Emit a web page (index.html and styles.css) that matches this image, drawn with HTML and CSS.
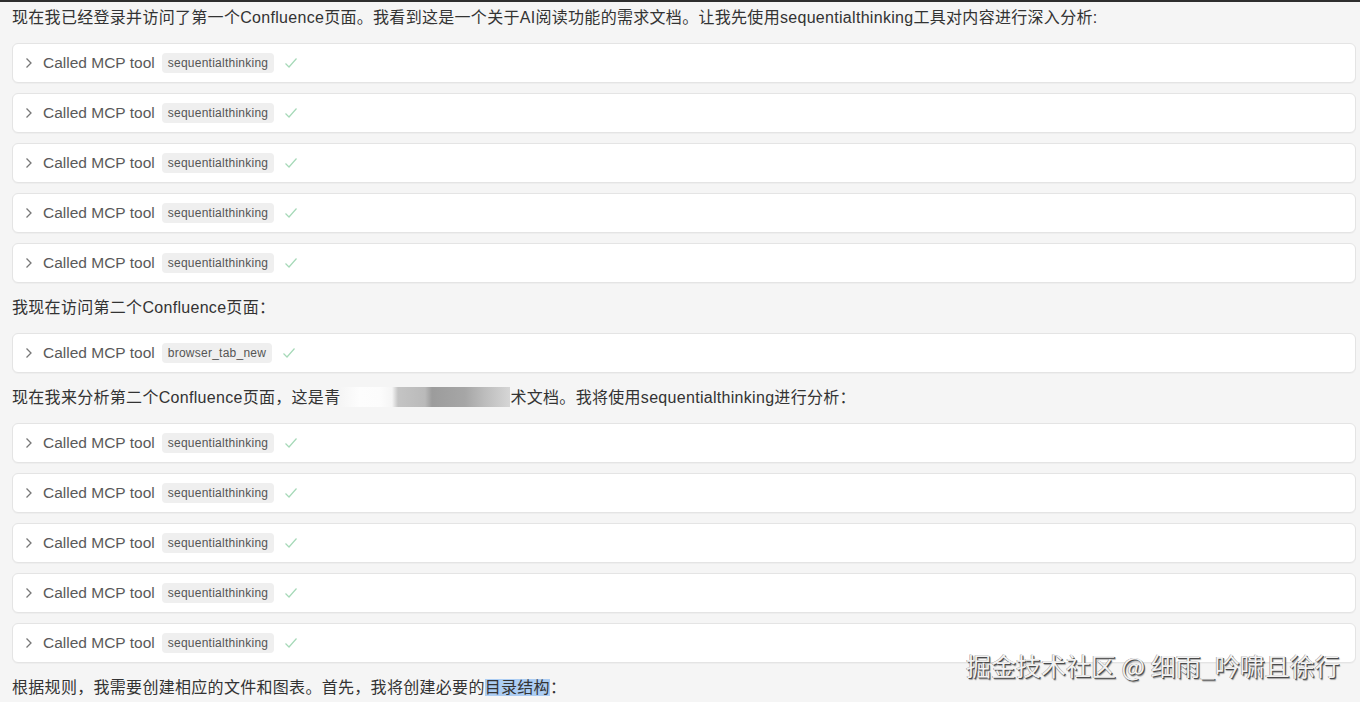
FILE: index.html
```html
<!DOCTYPE html>
<html lang="zh-CN">
<head>
<meta charset="UTF-8">
<title>Chat</title>
<link rel="stylesheet" href="styles.css">
</head>
<body>
<div class="topbar"></div>
<div id="thread">
    <p class="msg">现在我已经登录并访问了第一个Confluence页面。我看到这是一个关于AI阅读功能的需求文档。让我先使用sequentialthinking工具对内容进行深入分析:</p>

    <div class="tool"><span class="chev"><svg width="8" height="12" viewBox="0 0 8 12"><path d="M1.5 1.5 L6 6 L1.5 10.5" fill="none" stroke="#777" stroke-width="1.3"/></svg></span><span class="label">Called MCP tool</span><span class="badge">sequentialthinking</span><span class="ok"><svg width="14" height="12" viewBox="0 0 14 12"><path d="M1.5 6.5 L5 10 L12.5 1.5" fill="none" stroke="#a6d9b8" stroke-width="1.2"/></svg></span></div>
    <div class="tool"><span class="chev"><svg width="8" height="12" viewBox="0 0 8 12"><path d="M1.5 1.5 L6 6 L1.5 10.5" fill="none" stroke="#777" stroke-width="1.3"/></svg></span><span class="label">Called MCP tool</span><span class="badge">sequentialthinking</span><span class="ok"><svg width="14" height="12" viewBox="0 0 14 12"><path d="M1.5 6.5 L5 10 L12.5 1.5" fill="none" stroke="#a6d9b8" stroke-width="1.2"/></svg></span></div>
    <div class="tool"><span class="chev"><svg width="8" height="12" viewBox="0 0 8 12"><path d="M1.5 1.5 L6 6 L1.5 10.5" fill="none" stroke="#777" stroke-width="1.3"/></svg></span><span class="label">Called MCP tool</span><span class="badge">sequentialthinking</span><span class="ok"><svg width="14" height="12" viewBox="0 0 14 12"><path d="M1.5 6.5 L5 10 L12.5 1.5" fill="none" stroke="#a6d9b8" stroke-width="1.2"/></svg></span></div>
    <div class="tool"><span class="chev"><svg width="8" height="12" viewBox="0 0 8 12"><path d="M1.5 1.5 L6 6 L1.5 10.5" fill="none" stroke="#777" stroke-width="1.3"/></svg></span><span class="label">Called MCP tool</span><span class="badge">sequentialthinking</span><span class="ok"><svg width="14" height="12" viewBox="0 0 14 12"><path d="M1.5 6.5 L5 10 L12.5 1.5" fill="none" stroke="#a6d9b8" stroke-width="1.2"/></svg></span></div>
    <div class="tool"><span class="chev"><svg width="8" height="12" viewBox="0 0 8 12"><path d="M1.5 1.5 L6 6 L1.5 10.5" fill="none" stroke="#777" stroke-width="1.3"/></svg></span><span class="label">Called MCP tool</span><span class="badge">sequentialthinking</span><span class="ok"><svg width="14" height="12" viewBox="0 0 14 12"><path d="M1.5 6.5 L5 10 L12.5 1.5" fill="none" stroke="#a6d9b8" stroke-width="1.2"/></svg></span></div>

    <p class="msg">我现在访问第二个Confluence页面：</p>

    <div class="tool"><span class="chev"><svg width="8" height="12" viewBox="0 0 8 12"><path d="M1.5 1.5 L6 6 L1.5 10.5" fill="none" stroke="#777" stroke-width="1.3"/></svg></span><span class="label">Called MCP tool</span><span class="badge">browser_tab_new</span><span class="ok"><svg width="14" height="12" viewBox="0 0 14 12"><path d="M1.5 6.5 L5 10 L12.5 1.5" fill="none" stroke="#a6d9b8" stroke-width="1.2"/></svg></span></div>

    <p class="msg">现在我来分析第二个Confluence页面，这是青<span class="redact"></span>术文档。我将使用sequentialthinking进行分析：</p>

    <div class="tool"><span class="chev"><svg width="8" height="12" viewBox="0 0 8 12"><path d="M1.5 1.5 L6 6 L1.5 10.5" fill="none" stroke="#777" stroke-width="1.3"/></svg></span><span class="label">Called MCP tool</span><span class="badge">sequentialthinking</span><span class="ok"><svg width="14" height="12" viewBox="0 0 14 12"><path d="M1.5 6.5 L5 10 L12.5 1.5" fill="none" stroke="#a6d9b8" stroke-width="1.2"/></svg></span></div>
    <div class="tool"><span class="chev"><svg width="8" height="12" viewBox="0 0 8 12"><path d="M1.5 1.5 L6 6 L1.5 10.5" fill="none" stroke="#777" stroke-width="1.3"/></svg></span><span class="label">Called MCP tool</span><span class="badge">sequentialthinking</span><span class="ok"><svg width="14" height="12" viewBox="0 0 14 12"><path d="M1.5 6.5 L5 10 L12.5 1.5" fill="none" stroke="#a6d9b8" stroke-width="1.2"/></svg></span></div>
    <div class="tool"><span class="chev"><svg width="8" height="12" viewBox="0 0 8 12"><path d="M1.5 1.5 L6 6 L1.5 10.5" fill="none" stroke="#777" stroke-width="1.3"/></svg></span><span class="label">Called MCP tool</span><span class="badge">sequentialthinking</span><span class="ok"><svg width="14" height="12" viewBox="0 0 14 12"><path d="M1.5 6.5 L5 10 L12.5 1.5" fill="none" stroke="#a6d9b8" stroke-width="1.2"/></svg></span></div>
    <div class="tool"><span class="chev"><svg width="8" height="12" viewBox="0 0 8 12"><path d="M1.5 1.5 L6 6 L1.5 10.5" fill="none" stroke="#777" stroke-width="1.3"/></svg></span><span class="label">Called MCP tool</span><span class="badge">sequentialthinking</span><span class="ok"><svg width="14" height="12" viewBox="0 0 14 12"><path d="M1.5 6.5 L5 10 L12.5 1.5" fill="none" stroke="#a6d9b8" stroke-width="1.2"/></svg></span></div>
    <div class="tool"><span class="chev"><svg width="8" height="12" viewBox="0 0 8 12"><path d="M1.5 1.5 L6 6 L1.5 10.5" fill="none" stroke="#777" stroke-width="1.3"/></svg></span><span class="label">Called MCP tool</span><span class="badge">sequentialthinking</span><span class="ok"><svg width="14" height="12" viewBox="0 0 14 12"><path d="M1.5 6.5 L5 10 L12.5 1.5" fill="none" stroke="#a6d9b8" stroke-width="1.2"/></svg></span></div>

    <p class="msg">根据规则，我需要创建相应的文件和图表。首先，我将创建必要的<span class="sel">目录结构</span>：</p>
</div>
<div class="watermark">掘金技术社区 @ 细雨_吟啸且徐行</div>
</body>
</html>
```

FILE: styles.css
```css
html, body {
    margin: 0px; padding: 0px;
    background-color: #f5f5f5;
    color: #333;
    font-family: "Liberation Sans", "Noto Sans CJK SC", sans-serif;
    overflow: hidden;
}
.topbar {
    height: 2px;
    background: #2e2e2e;
}
#thread {
    display: flex;
    flex-direction: column;
    gap: 10px;
    padding: 1px 4px 0px 12px;
}
.msg {
    margin: 3px 0px;
    font-size: 16px;
    line-height: 24px;
    letter-spacing: 0.3px;
    white-space: nowrap;
}
.tool {
    box-sizing: border-box;
    height: 40px;
    display: flex;
    align-items: center;
    background: #fff;
    border: 1px solid #e4e4e4;
    border-radius: 6px;
    box-shadow: 0 1px 1px rgba(0,0,0,0.03);
    padding: 0px 12px;
}
.chev { display: flex; margin-right: 10px; }
.label {
    font-size: 15.5px;
    color: #5a5a5a;
}
.badge {
    margin-left: 7px;
    height: 20px;
    line-height: 20px;
    padding: 0px 6px;
    background: #efefef;
    border-radius: 4px;
    font-size: 12px;
    letter-spacing: 0.25px;
    color: #555;
}
.ok { display: flex; margin-left: 10px; }
.redact {
    display: inline-block;
    width: 170px;
    height: 20px;
    vertical-align: -4px;
    background: linear-gradient(90deg, #f5f5f5 0px, #fdfdfd 20px, #fcfcfc 40px, #f5f5f5 52px, #c4c4c4 58px, #bababa 85px, #9c9c9c 92px, #a6a6a6 125px, #bdbdbd 145px, #d6d6d6 170px);
}
.sel { background: #accdf3; }
.watermark {
    position: absolute;
    left: 966px;
    top: 648px;
    font-family: "Noto Sans CJK SC", sans-serif;
    font-size: 25px;
    line-height: 34px;
    color: #f2f2f2;
    text-shadow: 1px 1px 0 #4a4a4a, -0.5px -0.5px 0 #8a8a8a, 1.5px 1.5px 1px rgba(0,0,0,0.35);
    white-space: nowrap;
}
```
